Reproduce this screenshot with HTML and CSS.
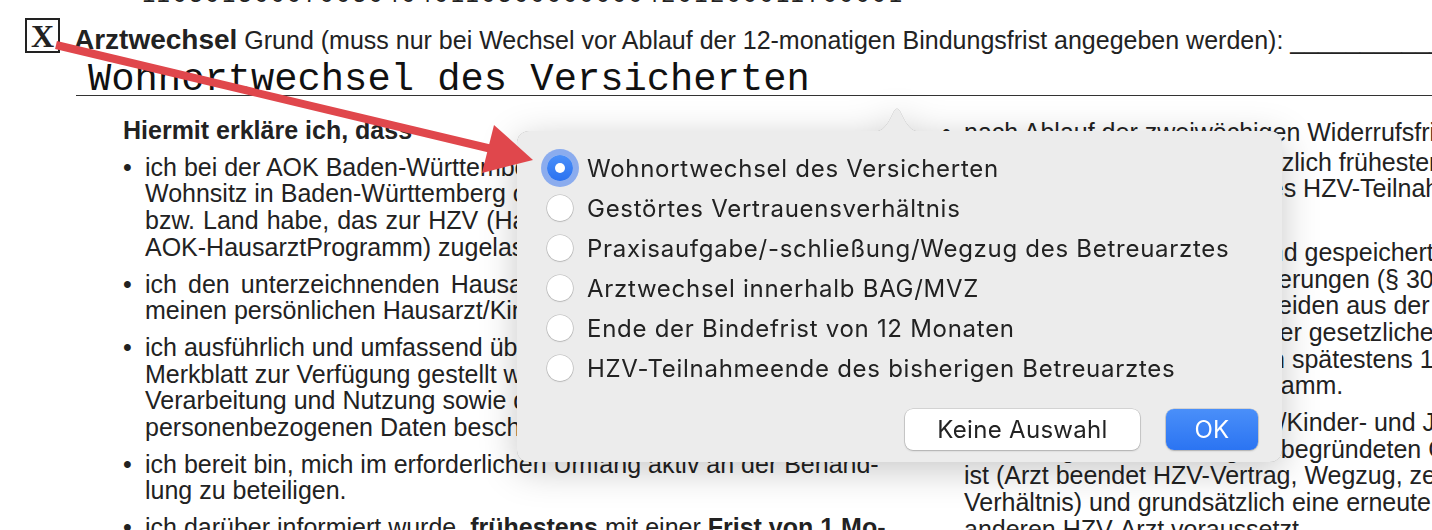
FILE: index.html
```html
<!DOCTYPE html>
<html lang="de">
<head>
<meta charset="UTF-8">
<title>Teilnahmeerklärung HZV</title>
<link rel="stylesheet" href="styles.css">
</head>
<body>

<div class="numline"><span>11050150007005040401105000000004201200011700001</span></div>

<div class="field">
  <div class="check">X</div>
  <div class="field-label"><b>Arztwechsel</b> Grund (muss nur bei Wechsel vor Ablauf der 12-monatigen Bindungsfrist angegeben werden): ________________</div>
</div>
<div class="typed">Wohnortwechsel des Versicherten</div>

<div class="cols">
  <div class="col left">
    <h4>Hiermit erkläre ich, dass</h4>
    <ul>
      <li><p class="txt">
        <span>ich bei der AOK Baden-Württemberg gesetzlich versichert bin und</span>
        <span>Wohnsitz in Baden-Württemberg oder einem anderen Bundesland</span>
        <span>bzw. Land habe, das zur HZV (Hausarztzentrierte Versorgung im</span>
        <span>AOK-HausarztProgramm) zugelassen ist;</span>
      </p></li>
      <li><p class="txt">
        <span>ich den unterzeichnenden Hausarzt/Kinder- und Jugendarzt als</span>
        <span>meinen persönlichen Hausarzt/Kinder- und Jugendarzt wähle;</span>
      </p></li>
      <li><p class="txt">
        <span>ich ausführlich und umfassend über die HZV informiert und mir ein</span>
        <span>Merkblatt zur Verfügung gestellt wurde, in welchem die Erhebung,</span>
        <span>Verarbeitung und Nutzung sowie die Übermittlung meiner sensiblen</span>
        <span>personenbezogenen Daten beschrieben sind;</span>
      </p></li>
      <li><p class="txt">
        <span>ich bereit bin, mich im erforderlichen Umfang aktiv an der Behand-</span>
        <span>lung zu beteiligen.</span>
      </p></li>
      <li><p class="txt">
        <span>ich darüber informiert wurde, <b>frühestens</b> mit einer <b>Frist von 1 Mo-</b></span>
        <span><b>nat</b> zum Quartalsende wechseln zu können.</span>
      </p></li>
    </ul>
  </div>

  <div class="col right">
    <ul>
      <li><p class="txt">
        <span>nach Ablauf der zweiwöchigen Widerrufsfrist meine Teilnahme</span>
        <span>es seine Teilnahme grundsätzlich frühestens zum Ende</span>
        <span>nach dem Jahr zum Ende des HZV-Teilnahmejahres</span>
        <span>kündigen kann;</span>
      </p></li>
      <li><p class="txt">
        <span>Befunddaten ausgewertet und gespeichert werden,</span>
        <span>auch an alle Krankenversicherungen (§ 305 SGB V)</span>
        <span>jedoch bis zu seinen Ausscheiden aus der HZV und</span>
        <span>gemäß aller Vorgaben und der gesetzlichen Fristen</span>
        <span>Vorschriften gelöscht werden spätestens 10 Jahre</span>
        <span>Jahre in AOK-HausarztProgramm.</span>
      </p></li>
      <li><p class="txt">
        <span>ich, den gewählten Hausarzt/Kinder- und Jugendarzt nur</span>
        <span>bei Vorlage eines wichtigen, begründeten Grundes</span>
        <span>ist (Arzt beendet HZV-Vertrag, Wegzug, zerrüttetes Vertrauens-</span>
        <span>Verhältnis) und grundsätzlich eine erneute Einschreibung bei einem</span>
        <span>anderen HZV-Arzt voraussetzt.</span>
      </p></li>
    </ul>
  </div>
</div>

<div class="popover">
  <svg class="tip" width="52" height="25" viewBox="0 0 52 25">
    <path d="M0 25 C10 25 14 21 19 12 L23 4 Q26 -1 29 4 L33 12 C38 21 42 25 52 25 Z"/>
  </svg>
  <label class="opt"><span class="radio on"></span>Wohnortwechsel des Versicherten</label>
  <label class="opt"><span class="radio"></span>Gestörtes Vertrauensverhältnis</label>
  <label class="opt"><span class="radio"></span>Praxisaufgabe/-schließung/Wegzug des Betreuarztes</label>
  <label class="opt"><span class="radio"></span>Arztwechsel innerhalb BAG/MVZ</label>
  <label class="opt"><span class="radio"></span>Ende der Bindefrist von 12 Monaten</label>
  <label class="opt"><span class="radio"></span>HZV-Teilnahmeende des bisherigen Betreuarztes</label>
  <div class="buttons">
    <button class="btn">Keine Auswahl</button>
    <button class="btn ok">OK</button>
  </div>
</div>

<!-- red annotation arrow -->
<svg class="annot" width="1432" height="530" viewBox="0 0 1432 530">
  <line x1="56" y1="45" x2="496" y2="150" stroke="#e0474c" stroke-width="8"/>
  <polygon points="533,160 494,125 482,173" fill="#e0474c"/>
</svg>

</body>
</html>
```

FILE: styles.css
```css
body {
  margin: 0;
  height: 530px;
  overflow: hidden;
  position: relative;
  background: #fff;
  color: #222;
  font: 25px/26.7px "Liberation Sans", Arial, sans-serif;
}

.numline {
  height: 4px;
  overflow: hidden;
  padding-left: 142px;
  white-space: nowrap;
  font-size: 24px;
}
.numline span {
  display: block;
  margin-top: -19px;
  letter-spacing: 3px;
}

/* checkbox row */
.field {
  display: flex;
  align-items: flex-start;
  margin: 14px 0 0 25px;
  white-space: nowrap;
}
.check {
  flex: none;
  width: 31px;
  height: 31px;
  border: 2px solid #222;
  font: bold 32px/33px "Liberation Serif", serif;
  text-align: center;
}
.field-label {
  margin: 7px 0 0 14px;
  line-height: 30px;
}
.field-label b {
  font-size: 28px;
}

.typed {
  margin: 10px 0 0 76px;
  padding-left: 12px;
  border-bottom: 1px solid #333;
  font: 38.8px/30px "Liberation Mono", "Courier New", monospace;
  color: #111;
  white-space: nowrap;
}

/* two text columns */
.cols {
  display: grid;
  grid-template-columns: 819px 1fr;
  margin-top: 21px;
  padding-left: 123px;
  white-space: nowrap;
}
.col {
  min-width: 0;
}
.right {
  margin-top: 2px;
}
h4 {
  margin: 0 0 10px;
  font-size: 25px;
}
ul {
  list-style: none;
  margin: 0;
  padding: 0;
}
li {
  display: flex;
  margin-bottom: 10px;
}
li::before {
  content: "•";
  flex: none;
  width: 22px;
}
.txt {
  margin: 0;
}
.txt span {
  display: block;
}
.left .txt {
  width: 724px;
}
.left .txt span {
  text-align: justify;
  text-align-last: justify;
}
.left .txt span:last-child {
  text-align-last: left;
}
/* first line of the right column sits a little apart */
.right li:first-child span:first-child {
  padding-bottom: 3px;
}

/* popover dialog */
.popover {
  position: absolute;
  left: 517px;
  top: 131px;
  width: 765px;
  height: 331px;
  box-sizing: border-box;
  padding: 17px 24px 12px 30px;
  display: flex;
  flex-direction: column;
  background: #ececec;
  border-radius: 12px;
  filter: drop-shadow(0 0 0.6px rgba(0,0,0,.35)) drop-shadow(0 8px 18px rgba(0,0,0,.22));
  font: 24px "Inter", "Noto Sans", sans-serif;
  color: #222;
}
.tip {
  position: absolute;
  left: 354px;
  top: -24px;
  fill: #ececec;
}
.opt {
  display: flex;
  align-items: center;
  gap: 14px;
  height: 40px;
  white-space: nowrap;
  letter-spacing: 0.72px;
}
.radio {
  flex: none;
  width: 26px;
  height: 26px;
  border-radius: 50%;
  background: #fff;
  box-shadow: 0 0 0 0.6px rgba(0,0,0,.22), 0 1px 1.5px rgba(0,0,0,.12);
  display: flex;
  align-items: center;
  justify-content: center;
}
.radio.on {
  background: linear-gradient(#4a8ff9, #2b72f0);
  box-shadow: 0 0 0 6px rgba(60,120,240,.55);
}
.radio.on::after {
  content: "";
  width: 10px;
  height: 10px;
  border-radius: 50%;
  background: #fff;
}
.buttons {
  margin-top: auto;
  display: flex;
  justify-content: flex-end;
  gap: 26px;
}
.btn {
  height: 41px;
  width: 235px;
  padding: 0;
  border: none;
  border-radius: 8px;
  background: #fff;
  box-shadow: 0 0 0 0.6px rgba(0,0,0,.2), 0 1px 2px rgba(0,0,0,.18);
  font: inherit;
  letter-spacing: 0.3px;
  color: #222;
}
.btn.ok {
  width: 92px;
  background: linear-gradient(#4a8ff9, #2b74f2);
  color: #fff;
}

.annot {
  position: absolute;
  top: 0;
  left: 0;
  pointer-events: none;
}
```
